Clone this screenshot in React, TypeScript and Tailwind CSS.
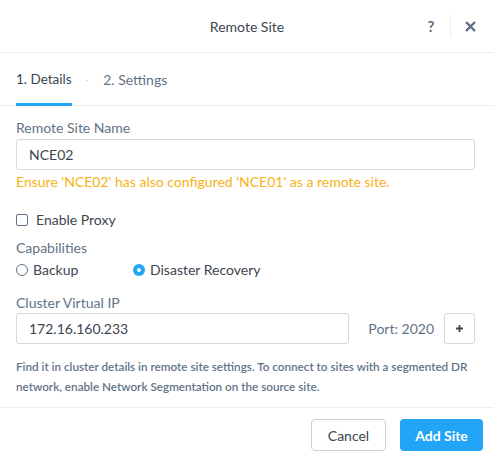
import React from "react";

const App: React.FC = () => {
  return (
    <div
      className="w-[494px] h-[463px] bg-white flex flex-col text-[#3d4550]"
      style={{ fontFamily: "Lato, 'Open Sans', sans-serif" }}
    >
      {/* Header */}
      <div className="h-[53px] border-b border-[#ebedf0] flex items-center relative shrink-0">
        <div className="flex-1 text-center text-[14px] text-[#3d4550]">Remote Site</div>
        <div className="absolute right-0 top-0 h-full flex items-center">
          <span className="w-[22px] text-center text-[15px] font-bold text-[#5f6e80] ml-[2px]">?</span>
          <span className="w-px h-[22px] bg-[#ebedf0] mx-[8px]" />
          <svg className="mr-[18px] ml-[6px]" width="11" height="11" viewBox="0 0 10 10">
            <path d="M1.5 1.5 L8.5 8.5 M8.5 1.5 L1.5 8.5" stroke="#5f6e80" strokeWidth="2" strokeLinecap="round" />
          </svg>
        </div>
      </div>

      {/* Tabs */}
      <div className="h-[53px] border-b border-[#ebedf0] flex items-stretch px-4 shrink-0">
        <div className="relative flex items-center text-[13.5px] text-[#3d4550]">
          1. Details
          <span className="absolute left-0 right-0 bottom-[-1px] h-[3px] bg-[#22a5f7]" />
        </div>
        <div className="flex items-center pl-[14px] pr-[15px] text-[#c6ccd3] text-[10px]">·</div>
        <div className="flex items-center text-[14px] text-[#627386]">2. Settings</div>
      </div>

      {/* Body */}
      <div className="flex-1 px-4 pt-[13px] flex flex-col text-[14px]">
        <label className="text-[#627386] leading-[18px]">Remote Site Name</label>
        <div className="mt-[2px] h-[31px] border border-[#d3d9e0] rounded-[3px] flex items-center px-3 mr-[3px]">
          NCE02
        </div>
        <div className="mt-[3px] text-[#f7b215] leading-[18px]">
          Ensure 'NCE02' has also configured 'NCE01' as a remote site.
        </div>

        <div className="mt-[18px] flex items-center gap-[8px]">
          <span className="w-[12px] h-[12px] border border-[#627386] rounded-[2px]" />
          Enable Proxy
        </div>

        <div className="mt-[9px] text-[#627386] leading-[18px]">Capabilities</div>
        <div className="mt-[2px] flex items-center">
          <div className="flex items-center gap-[5px] w-[117px]">
            <span className="w-[12px] h-[12px] border border-[#627386] rounded-full" />
            Backup
          </div>
          <div className="flex items-center gap-[5px]">
            <span className="w-[12px] h-[12px] rounded-full bg-[#22a5f7] flex items-center justify-center">
              <span className="w-[4px] h-[4px] rounded-full bg-white" />
            </span>
            Disaster Recovery
          </div>
        </div>

        <div className="mt-[14px] text-[#627386] leading-[18px]">Cluster Virtual IP</div>
        <div className="mt-[1px] flex items-center mr-[3px]">
          <div className="w-[333px] h-[31px] border border-[#d3d9e0] rounded-[3px] flex items-center px-3">
            172.16.160.233
          </div>
          <div className="flex-1 text-right pr-[10px] text-[#627386]">Port: 2020</div>
          <div className="w-[31px] h-[31px] border border-[#d3d9e0] rounded-[3px] flex items-center justify-center">
            <svg width="9" height="9" viewBox="0 0 9 9">
              <path d="M4.5 1 V8 M1 4.5 H8" stroke="#3d4550" strokeWidth="1.8" />
            </svg>
          </div>
        </div>

        <p className="mt-[12px] text-[11.7px] leading-[20px] text-[#627386] font-semibold">
          Find it in cluster details in remote site settings. To connect to sites with a segmented DR network, enable
          Network Segmentation on the source site.
        </p>
      </div>

      {/* Footer */}
      <div className="h-[55px] border-t border-[#ebedf0] flex items-center justify-end gap-[14px] pr-[11px] shrink-0 mb-[1px]">
        <button className="w-[75px] h-[32px] border border-[#c9cfd6] rounded-[4px] text-[14px] text-[#3d4550]">
          Cancel
        </button>
        <button className="w-[83px] h-[32px] rounded-[4px] bg-[#22a5f7] text-white text-[14px] font-bold">
          Add Site
        </button>
      </div>
    </div>
  );
};

export default App;
